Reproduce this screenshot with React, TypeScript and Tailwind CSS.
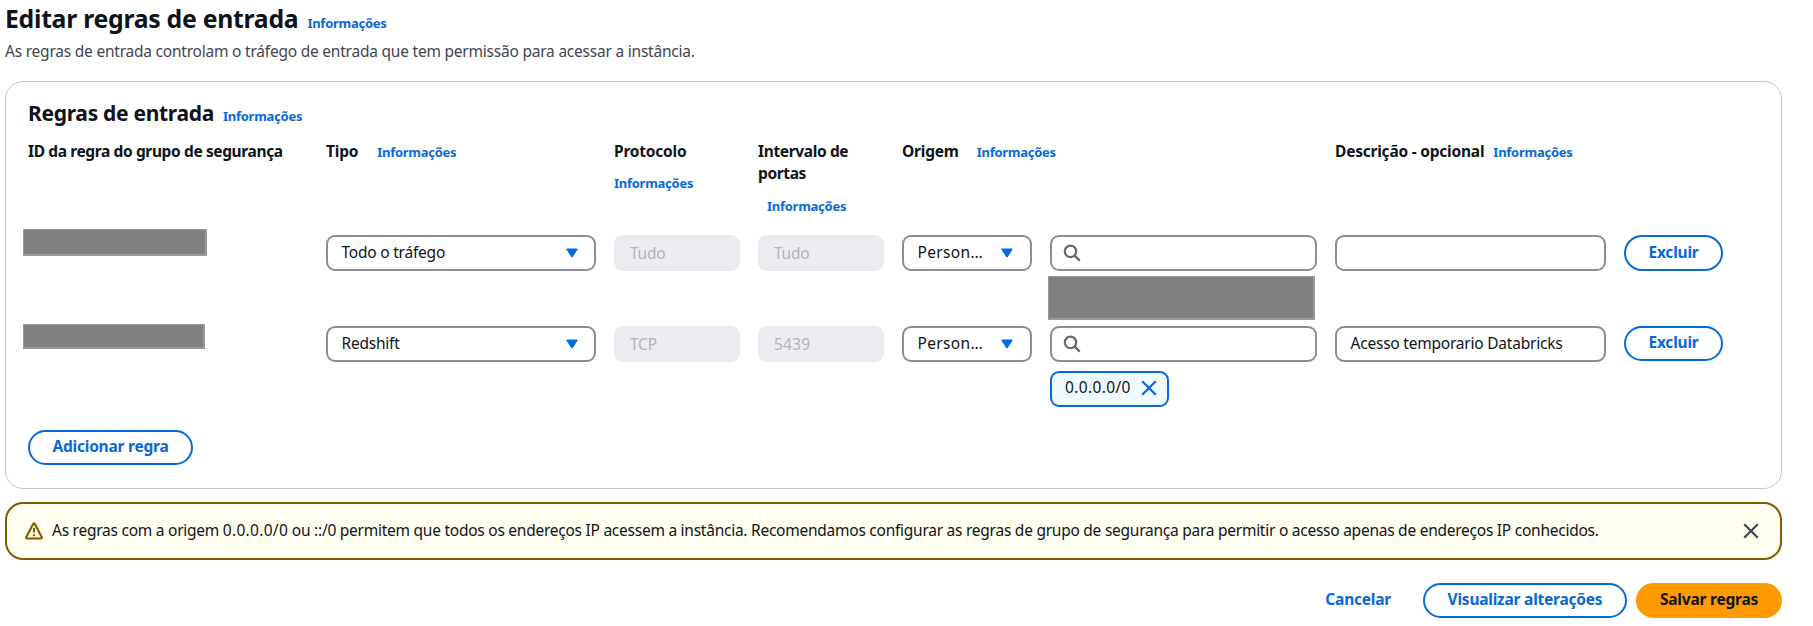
import type { ReactNode } from "react";

const FONT = "font-['Noto_Sans','Open_Sans',sans-serif]";

function Info({ className = "" }: { className?: string }) {
  return (
    <a className={`whitespace-nowrap text-[13px] font-bold tracking-[-0.26px] text-[#0869d6] ${className}`}>Informações</a>
  );
}

function Caret() {
  return (
    <svg className="shrink-0" width="12" height="10" viewBox="0 0 12 10">
      <path d="M1.2 1.2h9.6L6 8.6z" fill="#006ce0" stroke="#006ce0" strokeWidth="1.6" strokeLinejoin="round" />
    </svg>
  );
}

function SearchIcon() {
  return (
    <svg className="shrink-0" width="18" height="18" viewBox="0 0 18 18" fill="none" stroke="#656871" strokeWidth="2.2">
      <circle cx="7.5" cy="7.4" r="5.7" />
      <path d="M11.5 11.4l5.2 5.2" />
    </svg>
  );
}

function CloseIcon({ color }: { color: string }) {
  return (
    <svg className="shrink-0" width="16" height="16" viewBox="0 0 16 16" fill="none" stroke={color} strokeWidth="2.2">
      <path d="M1.2 1.2l13.6 13.6M14.8 1.2L1.2 14.8" />
    </svg>
  );
}

function WarningIcon() {
  return (
    <svg className="shrink-0" width="18" height="18" viewBox="0 0 18 18" fill="none" stroke="#855900" strokeWidth="2.1" strokeLinejoin="round">
      <path d="M8.3 1.8Q9 .9 9.7 1.8L16.8 15.2q.3 1.3-.9 1.3H2.1q-1.2 0-.9-1.3z" />
      <path d="M9 6v4.6M9 12.2v2" />
    </svg>
  );
}

const FIELD = "flex h-9 items-center rounded-[9px] border-2 border-[#8c8c94] bg-white";

function Select({ children, className = "pr-4" }: { children: ReactNode; className?: string }) {
  return (
    <div className={`${FIELD} justify-between pl-[13.5px] pb-px ${className}`}>
      <span className="-mt-[2px]">{children}</span>
      <Caret />
    </div>
  );
}

function Disabled({ children }: { children: ReactNode }) {
  return (
    <div className="flex h-9 items-center rounded-[9px] bg-[#ebebf0] pb-px pl-[16px] text-[#b4b4bb]">{children}</div>
  );
}

function Search() {
  return (
    <div className={`${FIELD} pl-[11px]`}>
      <SearchIcon />
    </div>
  );
}

function Button({ children, className = "" }: { children: ReactNode; className?: string }) {
  return (
    <button
      className={`flex items-center justify-center whitespace-nowrap rounded-full border-2 border-[#0869d6] bg-white pb-[3px] font-bold text-[#0869d6] ${className}`}
    >
      {children}
    </button>
  );
}

const REDACTED = "border border-b-2 border-r-2 border-[#999999] bg-[#808080]";
const COLUMNS = "grid grid-cols-[280px_270px_126px_126px_130px_267px_271px_99px] gap-x-[18px]";

export default function App() {
  return (
    <main className={`${FONT} h-[626px] w-[1813px] overflow-hidden bg-white pl-[5px] pr-[31px] text-[15.5px] leading-[22px] tracking-[-0.22px] text-[#0f141a]`}>
      <header>
        <div className="flex h-[37px] items-baseline leading-[37px]">
          <h1 className="text-[24.8px] font-bold tracking-[-0.28px]">Editar regras de entrada</h1>
          <Info className="ml-[9px]" />
        </div>
        <p className="mt-[3px] text-[#424650]">
          As regras de entrada controlam o tráfego de entrada que tem permissão para acessar a instância.
        </p>
      </header>

      <section className="mt-[19px] h-[408px] rounded-[18px] border border-[#c6c6cd] px-[22px] pt-[17px]">
        <div className="flex h-7 items-baseline leading-7">
          <h2 className="text-[21px] font-bold tracking-[-0.3px]">Regras de entrada</h2>
          <Info className="ml-[9px]" />
        </div>

        <div className={`${COLUMNS} mt-[13px] h-[95px] items-start font-bold`}>
          <div className="tracking-[-0.38px]">ID da regra do grupo de segurança</div>
          <div className="flex items-baseline">
            Tipo
            <Info className="ml-[19px]" />
          </div>
          <div>
            Protocolo
            <Info className="mt-[10px] block leading-[22px]" />
          </div>
          <div>
            <span className="block w-[110px] tracking-[-0.36px]">Intervalo de portas</span>
            <Info className="ml-[9px] mt-[11px] block leading-[22px]" />
          </div>
          <div className="col-span-2 flex items-baseline">
            Origem
            <Info className="ml-[18px]" />
          </div>
          <div className="flex items-baseline whitespace-nowrap">
            Descrição - opcional
            <Info className="ml-[9px]" />
          </div>
        </div>

        <div className={`${COLUMNS} h-[91px] items-start`}>
          <div className={`${REDACTED} -ml-[5px] -mt-[6px] h-[27px] w-[184px]`} />
          <Select>Todo o tráfego</Select>
          <Disabled>Tudo</Disabled>
          <Disabled>Tudo</Disabled>
          <Select className="pr-[17px]">
            <span className="tracking-[0.35px]">Person…</span>
          </Select>
          <div>
            <Search />
            <div className={`${REDACTED} -ml-[2px] mt-[5px] h-[44px] w-[267px]`} />
          </div>
          <div className={FIELD} />
          <Button className="h-9">Excluir</Button>
        </div>

        <div className={`${COLUMNS} h-[104px] items-start`}>
          <div className={`${REDACTED} -ml-[5px] -mt-[2px] h-[25px] w-[182px]`} />
          <Select>Redshift</Select>
          <Disabled>TCP</Disabled>
          <Disabled>
            <span className="tracking-[0.2px]">5439</span>
          </Disabled>
          <Select className="pr-[17px]">
            <span className="tracking-[0.35px]">Person…</span>
          </Select>
          <div>
            <Search />
            <div className="mt-[9px] flex h-9 w-[119px] items-center justify-between rounded-[9px] border-2 border-[#0869d6] bg-[#f0fbff] pb-[2px] pl-[13px] pr-[10px]">
              <span className="-mt-[2px] tracking-[0.35px]">0.0.0.0/0</span>
              <CloseIcon color="#0869d6" />
            </div>
          </div>
          <div className={`${FIELD} pb-[2px] pl-[13.5px]`}>Acesso temporario Databricks</div>
          <Button className="h-[35px]">Excluir</Button>
        </div>

        <Button className="h-[35px] w-[165px]">Adicionar regra</Button>
      </section>

      <section className="mt-[13px] flex h-[58px] items-center rounded-[18px] border-2 border-[#855900] bg-[#fffef0] pl-[18px] pr-[21px]">
        <WarningIcon />
        <p className="-mt-[3px] ml-[9px] flex-1 whitespace-nowrap tracking-[-0.252px]">
          As regras com a origem <span className="tracking-[0.3px]">0.0.0.0/0</span> ou ::/0 permitem que todos os endereços IP acessem a
          instância. Recomendamos configurar as regras de grupo de segurança para permitir o acesso apenas de endereços IP
          conhecidos.
        </p>
        <CloseIcon color="#424650" />
      </section>

      <footer className="mt-[23px] flex h-[35px] items-stretch justify-end">
        <button className="mr-[32px] pb-[3px] font-bold text-[#0869d6]">Cancelar</button>
        <Button className="mr-[9px] w-[204px]">Visualizar alterações</Button>
        <button className="w-[146px] rounded-full bg-[#ff9900] pb-[3px] font-bold text-[#0f141a]">Salvar regras</button>
      </footer>
    </main>
  );
}
